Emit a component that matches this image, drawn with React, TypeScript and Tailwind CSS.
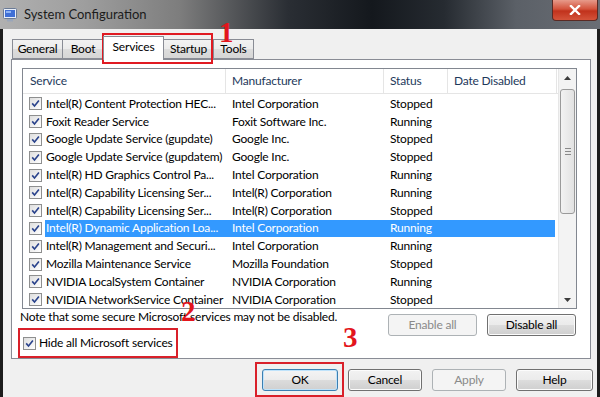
import React from 'react';

type Row = { name: string; maker: string; status: string; selected?: boolean };

const rows: Row[] = [
  { name: 'Intel(R) Content Protection HEC...', maker: 'Intel Corporation', status: 'Stopped' },
  { name: 'Foxit Reader Service', maker: 'Foxit Software Inc.', status: 'Running' },
  { name: 'Google Update Service (gupdate)', maker: 'Google Inc.', status: 'Stopped' },
  { name: 'Google Update Service (gupdatem)', maker: 'Google Inc.', status: 'Stopped' },
  { name: 'Intel(R) HD Graphics Control Pa...', maker: 'Intel Corporation', status: 'Running' },
  { name: 'Intel(R) Capability Licensing Ser...', maker: 'Intel(R) Corporation', status: 'Running' },
  { name: 'Intel(R) Capability Licensing Ser...', maker: 'Intel(R) Corporation', status: 'Stopped' },
  { name: 'Intel(R) Dynamic Application Loa...', maker: 'Intel Corporation', status: 'Running', selected: true },
  { name: 'Intel(R) Management and Securi...', maker: 'Intel Corporation', status: 'Running' },
  { name: 'Mozilla Maintenance Service', maker: 'Mozilla Foundation', status: 'Stopped' },
  { name: 'NVIDIA LocalSystem Container', maker: 'NVIDIA Corporation', status: 'Running' },
  { name: 'NVIDIA NetworkService Container', maker: 'NVIDIA Corporation', status: 'Stopped' },
];

const Check = () => (
  <span className="flex h-[13px] w-[13px] shrink-0 items-center justify-center border border-[#8e8f8f] bg-[linear-gradient(135deg,#dedede,#ffffff)]">
    <svg width="9" height="9" viewBox="0 0 9 9">
      <path d="M1.2 4.4 L3.5 7 L7.9 1.4" fill="none" stroke="#2a438c" strokeWidth="1.6" />
    </svg>
  </span>
);

const Button = ({ label, w, kind = 'normal' }: { label: string; w: string; kind?: 'normal' | 'default' | 'disabled' }) => {
  const look =
    kind === 'disabled'
      ? 'border-[#adb2b5] bg-[#f4f4f4] text-[#8a8a8a]'
      : kind === 'default'
        ? 'border-[#3c7fb1] bg-[linear-gradient(#f4f4f4_0%,#ececec_50%,#dcdcdc_50%,#d0d0d0_100%)] text-black shadow-[inset_0_0_0_1px_#bfe3fb]'
        : 'border-[#707070] bg-[linear-gradient(#f2f2f2_0%,#ebebeb_50%,#dddddd_50%,#cfcfcf_100%)] text-black shadow-[inset_0_0_0_1px_#fcfcfc]';
  return (
    <div className={`flex h-[22px] ${w} items-center justify-center rounded-[3px] border ${look}`}>{label}</div>
  );
};

const Tri = ({ up }: { up?: boolean }) => (
  <svg width="7" height="4" viewBox="0 0 7 4">
    <path d={up ? 'M0 4 L3.5 0 L7 4 Z' : 'M0 0 L3.5 4 L7 0 Z'} fill="#3b3b3b" />
  </svg>
);

const Tab = ({ label, w, active }: { label: string; w: string; active?: boolean }) => (
  <div
    className={`flex ${w} items-center justify-center border border-[#898c95] ${
      active
        ? 'relative z-10 -mb-px h-[24px] border-b-0 bg-white pb-[3px]'
        : 'h-[20px] bg-[linear-gradient(#f2f2f2_0%,#ebebeb_50%,#dddddd_50%,#d6d6d6_100%)]'
    } -ml-px first:ml-0`}
  >
    {label}
  </div>
);

export default function App() {
  return (
    <div className="relative h-[397px] w-[600px] overflow-hidden bg-[#f0f0f0] text-[12px] leading-none tracking-[-0.2px] text-black [font-family:Lato,sans-serif]">
      {/* title bar */}
      <div className="relative flex h-[29px] items-center bg-[linear-gradient(90deg,#b0b0b0_0%,#9e9e9e_14%,#7d7d7d_30%,#2a2e34_48%,#14181d_62%,#262b31_74%,#5b6067_86%,#6a6e75_100%)]">
        <svg className="ml-[3px] mt-[1px]" width="14" height="14" viewBox="0 0 14 14">
          <rect x="0.5" y="0.5" width="13" height="10" rx="1" fill="#e8eef8" stroke="#6a7a96" />
          <rect x="2" y="2" width="10" height="7" fill="#3f6fd6" />
          <rect x="3" y="3" width="5" height="2" fill="#8fb4f5" />
          <rect x="4" y="11" width="6" height="2.5" fill="#9aa6ba" />
        </svg>
        <span className="ml-[7px] text-[13px] tracking-normal text-[#1b1b1b]">System Configuration</span>
        <div className="absolute right-[2px] top-0 flex h-[21px] w-[46px] items-center justify-center rounded-b-[4px] border border-t-0 border-[#5a2a24] bg-[linear-gradient(#e79a8a_0%,#d4533c_45%,#c1321c_55%,#d4533a_100%)]">
          <svg width="12" height="10" viewBox="0 0 12 10">
            <path d="M2 1 L10 9 M10 1 L2 9" stroke="#ffffff" strokeWidth="2.4" strokeLinecap="square" />
          </svg>
        </div>
      </div>

      {/* window body */}
      <div className="flex h-[368px] flex-col border-x-[3px] border-[#1c1c1c]">
        <div className="mt-[7px] flex items-end pl-[9px]">
          <Tab label="General" w="w-[51px]" />
          <Tab label="Boot" w="w-[42px]" />
          <Tab label="Services" w="w-[61px]" active />
          <Tab label="Startup" w="w-[51px]" />
          <Tab label="Tools" w="w-[41px]" />
        </div>

        <div className="ml-[8px] flex h-[300px] w-[580px] flex-col border border-[#898c95] bg-white">
          {/* list */}
          <div className="ml-[10px] mt-[8px] flex h-[241px] w-[555px] border border-[#828790] bg-white">
            <div className="flex w-[535px] flex-col overflow-hidden">
              <div className="flex h-[25px] shrink-0 border-b border-[#e5e5e5] text-[#1e395b]">
                <div className="flex w-[203px] items-center border-r border-[#e5e5e5] pl-[7px]">Service</div>
                <div className="flex w-[158px] items-center border-r border-[#e5e5e5] pl-[6px]">Manufacturer</div>
                <div className="flex w-[64px] items-center border-r border-[#e5e5e5] pl-[6px]">Status</div>
                <div className="flex w-[109px] items-center border-r border-[#e5e5e5] pl-[6px]">Date Disabled</div>
              </div>
              <div className="mt-px flex flex-col">
                {rows.map((r, i) => (
                  <div key={i} className="flex h-[17.8px] shrink-0 items-center">
                    <div className="flex w-[22px] shrink-0 justify-start pl-[6px]">
                      <Check />
                    </div>
                    <div
                      className={`flex h-full w-[510px] items-center ${
                        r.selected ? 'bg-[#3399ff] text-white' : ''
                      }`}
                    >
                      <span className="w-[181px] shrink-0 whitespace-nowrap pl-[1px]">{r.name}</span>
                      <span className="w-[158px] shrink-0 whitespace-nowrap pl-[6px]">{r.maker}</span>
                      <span className="w-[64px] shrink-0 whitespace-nowrap pl-[6px]">{r.status}</span>
                    </div>
                  </div>
                ))}
              </div>
            </div>
            {/* scrollbar */}
            <div className="flex w-[18px] flex-col border-l border-[#e6e6e6] bg-[#f3f3f3]">
              <div className="flex h-[17px] shrink-0 items-center justify-center">
                <Tri up />
              </div>
              <div className="mx-[1px] mt-[3px] flex h-[125px] shrink-0 items-center justify-center rounded-[3px] border border-[#9a9a9a] bg-[linear-gradient(90deg,#f2f2f2,#e2e2e2)]">
                <div className="flex w-[6px] flex-col gap-[2px]">
                  <div className="h-px bg-[#8a8a8a]" />
                  <div className="h-px bg-[#8a8a8a]" />
                  <div className="h-px bg-[#8a8a8a]" />
                </div>
              </div>
              <div className="flex-1" />
              <div className="flex h-[17px] shrink-0 items-center justify-center">
                <Tri />
              </div>
            </div>
          </div>

          <div className="flex">
            <div className="flex flex-col pl-[8px]">
              <div className="h-[16px] leading-[16px] whitespace-nowrap">
                Note that some secure Microsoft services may not be disabled.
              </div>
              <div className="mt-[10px] flex h-[16px] items-center pl-[3px]">
                <Check />
                <span className="ml-[3px]">Hide all Microsoft services</span>
              </div>
            </div>
            <div className="ml-auto mr-[14px] mt-[5px] flex gap-[10px]">
              <Button label="Enable all" w="w-[89px]" kind="disabled" />
              <Button label="Disable all" w="w-[89px]" />
            </div>
          </div>
        </div>

        <div className="mt-[10px] flex justify-end gap-[10px] pr-[4px]">
          <Button label="OK" w="w-[76px]" kind="default" />
          <Button label="Cancel" w="w-[74px]" />
          <Button label="Apply" w="w-[74px]" kind="disabled" />
          <Button label="Help" w="w-[77px]" />
        </div>
      </div>

      {/* annotations */}
      <div className="pointer-events-none absolute left-[102px] top-[33px] h-[31px] w-[111px] border-2 border-[#e01a22]" />
      <div className="pointer-events-none absolute left-[18px] top-[328px] h-[30px] w-[160px] border-[2.5px] border-[#d9202a]" />
      <div className="pointer-events-none absolute left-[255px] top-[362px] h-[35px] w-[89px] border-[2.5px] border-[#d9202a]" />
      <div className="pointer-events-none absolute left-[219px] top-[18px] text-[29px] font-bold leading-none text-[#e3151c] [font-family:'Liberation_Serif',serif]">1</div>
      <div className="pointer-events-none absolute left-[181px] top-[297px] text-[29px] font-bold leading-none text-[#e3151c] [font-family:'Liberation_Serif',serif]">2</div>
      <div className="pointer-events-none absolute left-[343px] top-[323px] text-[29px] font-bold leading-none text-[#e3151c] [font-family:'Liberation_Serif',serif]">3</div>
    </div>
  );
}
